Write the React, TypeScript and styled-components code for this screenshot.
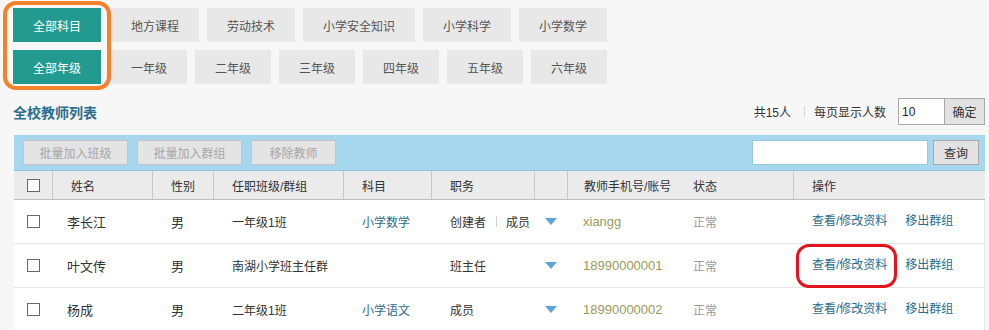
import styled, { createGlobalStyle } from 'styled-components';

const GlobalStyle = createGlobalStyle`
  html, body {
    margin: 0;
    padding: 0;
    background: #f7f7f7;
    font-family: 'Liberation Sans', 'Noto Sans CJK SC', sans-serif;
    font-size: 12px;
    color: #333;
  }
`;

const Page = styled.div`
  width: 989px;
  height: 330px;
  overflow: hidden;
`;

const FilterArea = styled.div`
  display: flex;
  align-items: flex-start;
  padding: 1px 0 0 3px;
`;

const Ring = styled.div`
  display: flex;
  flex-direction: column;
  gap: 8px;
  padding: 3px 6px 2px 6px;
  border: 4px solid #f5822a;
  border-radius: 13px;
`;

const FilterRows = styled.div`
  display: flex;
  flex-direction: column;
  gap: 8px;
  padding-top: 7px;
`;

const FilterRow = styled.div`
  display: flex;
  gap: 8px;
`;

const FilterButton = styled.div<{ active?: boolean }>`
  height: 34px;
  padding: 0 20px;
  display: flex;
  align-items: center;
  justify-content: center;
  font-size: 12px;
  background: ${({ active }) => (active ? '#229a90' : '#e8e8e8')};
  color: ${({ active }) => (active ? '#fff' : '#555')};
`;

const TitleBar = styled.div`
  display: flex;
  align-items: center;
  justify-content: space-between;
  height: 27px;
  margin: 8px 4px 0 13px;
`;

const Title = styled.div`
  font-size: 14px;
  font-weight: bold;
  color: #2c6e8e;
`;

const PageInfo = styled.div`
  display: flex;
  align-items: center;
  font-size: 12px;
  color: #333;
`;

const Divider = styled.span`
  width: 1px;
  height: 11px;
  background: #d6d6d6;
  margin: 0 9px 0 13px;
`;

const SizeInput = styled.input`
  box-sizing: border-box;
  width: 46px;
  height: 27px;
  margin-left: 12px;
  padding: 0 3px;
  border: 1px solid #a9a9a9;
  border-right: none;
  font-family: inherit;
  font-size: 12px;
  color: #222;
  outline: none;
`;

const GrayButton = styled.button<{ w: number; h: number }>`
  box-sizing: border-box;
  width: ${({ w }) => w}px;
  height: ${({ h }) => h}px;
  padding: 0;
  border: 1px solid #a8a8a8;
  background: #e2e2e2;
  font-family: inherit;
  font-size: 12px;
  color: #333;
`;

const Table = styled.div`
  margin: 10px 4px 0 14px;
`;

const Toolbar = styled.div`
  display: flex;
  align-items: center;
  height: 35px;
  padding: 0 6px 0 9px;
  background: #a6d7ee;
  border-bottom: 1px solid #8cc5e0;
`;

const ToolButton = styled.button<{ w: number }>`
  box-sizing: border-box;
  width: ${({ w }) => w}px;
  height: 25px;
  margin-right: 9px;
  padding: 0;
  border: 1px solid #c4c4c4;
  background: #e4e4e4;
  font-family: inherit;
  font-size: 12px;
  color: #a6a6a6;
`;

const SearchInput = styled.input`
  box-sizing: border-box;
  width: 176px;
  height: 25px;
  margin-left: auto;
  margin-right: 5px;
  border: 1px solid #96c8df;
  background: #fff;
  outline: none;
`;

const columns = '38px 100px 61px 130px 88px 103px 33px 113px 113px 1fr';

const HeaderRow = styled.div`
  display: grid;
  grid-template-columns: ${columns};
  height: 28px;
  background: #ebebeb;
  border-bottom: 1px solid #bdbdbd;
`;

const HeaderCell = styled.div<{ sep?: boolean; pad?: number }>`
  display: flex;
  align-items: center;
  padding-left: ${({ pad }) => (pad ?? 18)}px;
  border-left: ${({ sep }) => (sep ? '1px solid #c9c9c9' : 'none')};
  font-size: 12px;
  color: #333;
`;

const Row = styled.div`
  display: grid;
  grid-template-columns: ${columns};
  height: 43px;
  background: #fff;
  border-bottom: 1px solid #e6e6e6;
  border-right: 1px solid #e6e6e6;
`;

const Cell = styled.div<{ pad?: number; color?: string; size?: number }>`
  display: flex;
  align-items: center;
  padding-left: ${({ pad }) => (pad ?? 19)}px;
  font-size: ${({ size }) => size ?? 12}px;
  color: ${({ color }) => color ?? '#333'};
  white-space: nowrap;
`;

const CheckCell = styled.div`
  display: flex;
  align-items: center;
  justify-content: center;
`;

const Checkbox = styled.span`
  box-sizing: border-box;
  width: 13px;
  height: 13px;
  border: 1px solid #6a6a6a;
  background: #fff;
`;

const Roles = styled.span`
  display: flex;
  align-items: center;
`;

const RoleSep = styled.span`
  width: 1px;
  height: 11px;
  background: #d0d0d0;
  margin: 0 9px 0 10px;
`;

const Triangle = styled.span`
  width: 0;
  height: 0;
  margin: 0 auto;
  border-left: 6px solid transparent;
  border-right: 6px solid transparent;
  border-top: 7px solid #5fa6d6;
`;

const OpLink = styled.span<{ marked?: boolean }>`
  position: relative;
  display: inline-block;
  line-height: 17px;
  color: #2a6b8b;
  margin-right: 18px;

  &::after {
    content: '';
    display: ${({ marked }) => (marked ? 'block' : 'none')};
    position: absolute;
    top: -13px;
    bottom: -14px;
    left: -16px;
    right: -10px;
    border: 3px solid #e3141e;
    border-radius: 13px;
  }
`;

type Teacher = {
  name: string;
  klass: string;
  subject: string;
  roles: string[];
  account: string;
  marked?: boolean;
};

const teachers: Teacher[] = [
  { name: '李长江', klass: '一年级1班', subject: '小学数学', roles: ['创建者', '成员'], account: 'xiangg' },
  { name: '叶文传', klass: '南湖小学班主任群', subject: '', roles: ['班主任'], account: '18990000001', marked: true },
  { name: '杨成', klass: '二年级1班', subject: '小学语文', roles: ['成员'], account: '18990000002' },
];

const subjects = ['地方课程', '劳动技术', '小学安全知识', '小学科学', '小学数学'];
const grades = ['一年级', '二年级', '三年级', '四年级', '五年级', '六年级'];

const App = () => {
  return (
    <Page>
      <GlobalStyle />
      <FilterArea>
        <Ring>
          <FilterButton active>全部科目</FilterButton>
          <FilterButton active>全部年级</FilterButton>
        </Ring>
        <FilterRows>
          <FilterRow>
            {subjects.map((s) => (
              <FilterButton key={s}>{s}</FilterButton>
            ))}
          </FilterRow>
          <FilterRow>
            {grades.map((g) => (
              <FilterButton key={g}>{g}</FilterButton>
            ))}
          </FilterRow>
        </FilterRows>
      </FilterArea>

      <TitleBar>
        <Title>全校教师列表</Title>
        <PageInfo>
          共15人
          <Divider />
          每页显示人数
          <SizeInput defaultValue="10" />
          <GrayButton w={41} h={27}>确定</GrayButton>
        </PageInfo>
      </TitleBar>

      <Table>
        <Toolbar>
          <ToolButton w={105}>批量加入班级</ToolButton>
          <ToolButton w={105}>批量加入群组</ToolButton>
          <ToolButton w={85}>移除教师</ToolButton>
          <SearchInput />
          <GrayButton w={46} h={25}>查询</GrayButton>
        </Toolbar>

        <HeaderRow>
          <CheckCell>
            <Checkbox />
          </CheckCell>
          <HeaderCell sep>姓名</HeaderCell>
          <HeaderCell sep>性别</HeaderCell>
          <HeaderCell sep>任职班级/群组</HeaderCell>
          <HeaderCell sep>科目</HeaderCell>
          <HeaderCell sep>职务</HeaderCell>
          <HeaderCell sep />
          <HeaderCell sep pad={16}>教师手机号/账号</HeaderCell>
          <HeaderCell pad={13}>状态</HeaderCell>
          <HeaderCell sep>操作</HeaderCell>
        </HeaderRow>

        {teachers.map((t) => (
          <Row key={t.name}>
            <CheckCell>
              <Checkbox />
            </CheckCell>
            <Cell pad={15} size={13}>{t.name}</Cell>
            <Cell pad={19} size={13}>男</Cell>
            <Cell>{t.klass}</Cell>
            <Cell color="#2a6b8b">{t.subject}</Cell>
            <Cell>
              {t.roles.map((r, i) => (
                <Roles key={r}>
                  {i > 0 && <RoleSep />}
                  {r}
                </Roles>
              ))}
            </Cell>
            <Cell pad={0}>
              <Triangle />
            </Cell>
            <Cell pad={16} color="#9a9a5c" size={13}>{t.account}</Cell>
            <Cell pad={13} color="#9a9a9a">正常</Cell>
            <Cell pad={19}>
              <OpLink marked={t.marked}>查看/修改资料</OpLink>
              <OpLink>移出群组</OpLink>
            </Cell>
          </Row>
        ))}
      </Table>
    </Page>
  );
};

export default App;
